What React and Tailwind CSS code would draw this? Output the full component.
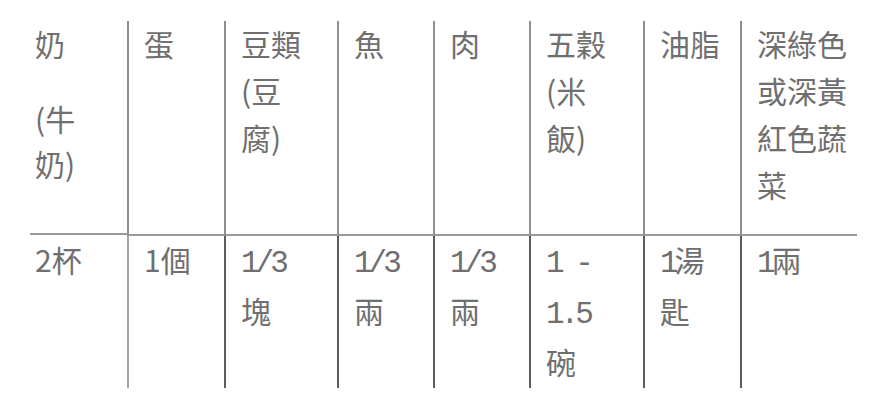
import React from 'react';

const cjk = "font-['Noto_Sans_CJK_TC','Noto_Sans_CJK_SC',sans-serif]";

// half-width digits of the body row, narrow like a Sung font
function Num({ children }) {
  return (
    <span className="font-['Liberation_Mono','Noto_Sans_CJK_TC',monospace] text-[31px] tracking-[-4px]">
      {children}
    </span>
  );
}

function Lines({ lines }) {
  return lines.map((l, i) => <div key={i}>{l}</div>);
}

export default function App() {
  const headerCells = [
    ['蛋'],
    ['豆類', '(豆', '腐)'],
    ['魚'],
    ['肉'],
    ['五穀', '(米', '飯)'],
    ['油脂'],
    ['深綠色', '或深黃', '紅色蔬', '菜'],
  ];

  const bodyCells = [
    [<Num>1/3</Num>, '塊'],
    [<Num>1/3</Num>, '兩'],
    [<Num>1/3</Num>, '兩'],
    [<Num>1 -</Num>, <Num>1.5</Num>, '碗'],
    [<><Num>1</Num>湯</>, '匙'],
    [<><Num>1</Num>兩</>],
  ];

  return (
    <div className={`w-[882px] h-[418px] bg-white text-[#6f6f6f] ${cjk} text-[30px] leading-[47px] pt-[21px] pl-[30px]`}>
      <div className="grid w-[827px] grid-cols-[97px_97px_113px_96px_96px_114px_97px_117px]">
        {/* header row */}
        <div className="h-[215px] pl-[5px] border-b-2 border-[#9a9a9a] -mt-px">
          <div>奶</div>
          <div className="mt-[29px] leading-[45px]">
            <div>(牛</div>
            <div>奶)</div>
          </div>
        </div>
        {headerCells.map((lines, i) => (
          <div
            key={i}
            className="h-[215px] pl-[15px] border-l-2 border-b-2 border-l-[#8e8e8e] border-b-[#9a9a9a]"
          >
            <div className="-mt-px">
              <Lines lines={lines} />
            </div>
          </div>
        ))}

        {/* body row */}
        <div className="h-[152px] pl-[5px]">2杯</div>
        <div className="h-[152px] pl-[15px] border-l-2 border-[#a3a3a3]">1個</div>
        {bodyCells.map((lines, i) => (
          <div key={i} className="h-[152px] pl-[15px] border-l-2 border-[#5c5c5c]">
            <Lines lines={lines} />
          </div>
        ))}
      </div>
    </div>
  );
}
